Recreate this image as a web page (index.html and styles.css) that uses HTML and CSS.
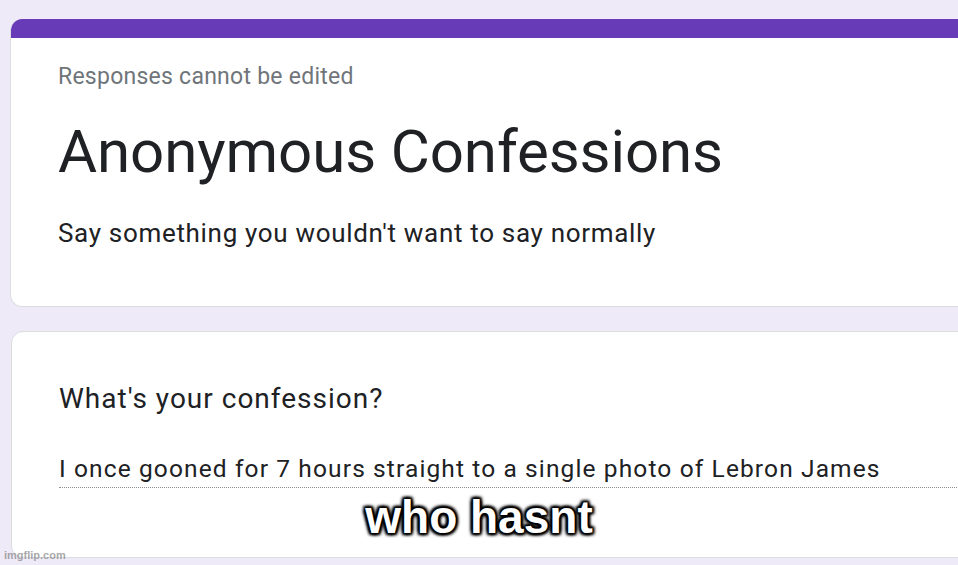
FILE: index.html
```html
<!DOCTYPE html>
<html>
<head>
<meta charset="utf-8">
<link rel="stylesheet" href="styles.css">
</head>
<body>
<main class="page">
  <section class="card header-card">
    <div class="accent"></div>
    <div class="card-body header-body">
      <p class="notice">Responses cannot be edited</p>
      <h1 class="title">Anonymous Confessions</h1>
      <p class="desc">Say something you wouldn't want to say normally</p>
    </div>
  </section>
  <section class="card question-card">
    <div class="card-body question-body">
      <h2 class="question">What's your confession?</h2>
      <div class="answer">I once gooned for 7 hours straight to a single photo of Lebron James</div>
    </div>
  </section>
</main>
<div class="caption">who hasnt</div>
<div class="watermark">imgflip.com</div>
</body>
</html>
```
FILE: styles.css
```css
html, body {
  margin: 0;
  padding: 0;
  width: 958px;
  height: 565px;
  overflow: hidden;
  background: #efeaf7;
  font-family: Roboto, "Liberation Sans", sans-serif;
}
.page {
  padding: 19px 0 0 10px;
  display: flex;
  flex-direction: column;
  gap: 24px;
}
.card {
  width: 1000px;
  background: #fff;
  border-radius: 12px;
  box-sizing: border-box;
}
.header-card {
  height: 288px;
  border: 1px solid #dadce0;
  border-top: none;
  overflow: hidden;
}
.accent {
  height: 19px;
  background: #673ab7;
  margin: 0 -1px;
}
.card-body {
  padding-left: 47px;
}
.header-body {
  padding-top: 26px;
}
.notice {
  margin: 0;
  font-size: 23px;
  line-height: 26px;
  letter-spacing: 0.25px;
  color: #70757a;
}
.title {
  margin: 29px 0 0;
  font-size: 60px;
  font-weight: 400;
  line-height: 66px;
  letter-spacing: -0.1px;
  color: #202124;
}
.desc {
  margin: 33px 0 0;
  font-size: 26px;
  line-height: 30px;
  letter-spacing: 0.68px;
  color: #202124;
}
.question-card {
  height: 227px;
  border: 1px solid #dadce0;
  margin-left: 1px;
  width: 999px;
}
.question-body {
  padding-top: 50px;
}
.question {
  margin: 0;
  font-size: 28px;
  font-weight: 400;
  line-height: 34px;
  letter-spacing: 1px;
  color: #202124;
}
.answer {
  margin-top: 38px;
  font-size: 24.5px;
  line-height: 30px;
  letter-spacing: 1.12px;
  color: #202124;
  padding-bottom: 3px;
  border-bottom: 1px dotted #8a8d91;
}
.caption {
  position: absolute;
  left: 0;
  right: 0;
  top: 490px;
  text-align: center;
  font-family: "Liberation Sans", Arial, sans-serif;
  font-weight: 700;
  font-size: 46px;
  line-height: 54px;
  color: #fff;
  text-shadow: 0 0 2px #000, 0 0 2px #000, 0 0 3px #000, 0 0 3px #000, 0 0 5px #000, 2px 2px 3px #000, -2px -2px 3px #000, 2px -2px 3px #000, -2px 2px 3px #000;
}
.watermark {
  position: absolute;
  left: 4px;
  top: 549px;
  font-family: "Liberation Sans", Arial, sans-serif;
  font-size: 11px;
  font-weight: 700;
  color: rgba(130, 130, 130, 0.7);
}
```
